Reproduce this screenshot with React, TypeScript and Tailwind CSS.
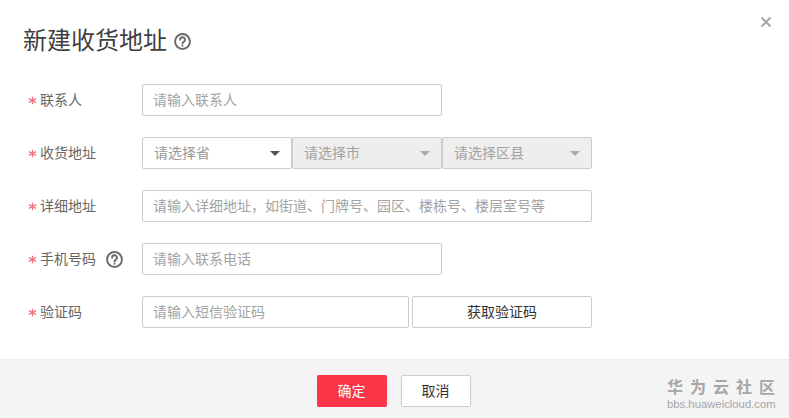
import React from "react";

const FONT = { fontFamily: '"Liberation Sans", "Noto Sans CJK SC", sans-serif' };

function Help({ size, width = 1.6 }: { size: number; width?: number }) {
  return (
    <svg width={size} height={size} viewBox="0 0 16 16" fill="none" stroke="#6b6b6b" strokeWidth={width} className="shrink-0">
      <circle cx="8" cy="8" r="7" />
      <path d="M5.7 6.3a2.3 2.3 0 1 1 3.4 2c-.8.45-1.1.8-1.1 1.6" strokeLinecap="round" />
      <circle cx="8" cy="12" r="0.6" fill="#6b6b6b" strokeWidth="0.8" />
    </svg>
  );
}

function Label({ text, help }: { text: string; help?: boolean }) {
  return (
    <div className="w-[114px] shrink-0 flex items-center text-[14px] text-[#666666] leading-[32px]">
      <span className="w-[12px] h-[32px] flex items-center justify-start">
        <svg width="9" height="9" viewBox="0 0 10 10" fill="none" stroke="#f0747c" strokeWidth="1.5">
          <path d="M5 .8v8.4M1 3l8 4M9 3L1 7" />
        </svg>
      </span>
      <span>{text}</span>
      {help && <span className="ml-[10px] flex"><Help size={17} width={1.8} /></span>}
    </div>
  );
}

function Field({ ph, w }: { ph: string; w: string }) {
  return (
    <div className={`${w} h-[32px] border border-[#cccccc] rounded-[2px] bg-white px-[10px] flex items-center text-[14px] text-[#a3a3a3]`}>
      {ph}
    </div>
  );
}

function Select({ ph, disabled }: { ph: string; disabled?: boolean }) {
  return (
    <div className={disabled
      ? "w-[150px] h-[32px] border border-[#cccccc] rounded-[2px] bg-[#eeeeee] px-[11px] flex items-center justify-between text-[14px] text-[#a3a3a3]"
      : "w-[150px] h-[32px] border border-[#cccccc] rounded-[2px] bg-white px-[11px] flex items-center justify-between text-[14px] text-[#999999]"}>
      <span>{ph}</span>
      <span className={disabled
        ? "w-0 h-0 border-x-[5px] border-x-transparent border-t-[5px] border-t-[#aaaaaa]"
        : "w-0 h-0 border-x-[5px] border-x-transparent border-t-[5px] border-t-[#555555]"} />
    </div>
  );
}

export default function App() {
  return (
    <div className="relative w-[789px] h-[418px] bg-white flex flex-col overflow-hidden" style={FONT}>
      <svg width="12" height="12" viewBox="0 0 12 12" className="absolute left-[760px] top-[16px]" stroke="#a8a8a8" strokeWidth="2.2">
        <path d="M1.5 1.5l9 9M10.5 1.5l-9 9" />
      </svg>

      <div className="flex-1 pl-[28px]">
        <div className="h-[84px] pt-[25px] -ml-[5px] flex items-start">
          <div className="flex items-center h-[32px] gap-[7px]">
            <span className="text-[24px] text-[#404040]">新建收货地址</span>
            <Help size={17} width={1.8} />
          </div>
        </div>
        <div className="flex flex-col gap-[21px]">
          <div className="flex"><Label text="联系人" /><Field ph="请输入联系人" w="w-[300px]" /></div>
          <div className="flex">
            <Label text="收货地址" />
            <Select ph="请选择省" />
            <Select ph="请选择市" disabled />
            <Select ph="请选择区县" disabled />
          </div>
          <div className="flex"><Label text="详细地址" /><Field ph="请输入详细地址，如街道、门牌号、园区、楼栋号、楼层室号等" w="w-[450px]" /></div>
          <div className="flex"><Label text="手机号码" help /><Field ph="请输入联系电话" w="w-[300px]" /></div>
          <div className="flex">
            <Label text="验证码" />
            <Field ph="请输入短信验证码" w="w-[267px]" />
            <div className="ml-[3px] w-[180px] h-[32px] border border-[#cccccc] rounded-[2px] bg-white flex items-center justify-center text-[14px] text-[#333333]">获取验证码</div>
          </div>
        </div>
      </div>

      <div className="h-[59px] bg-[#f4f4f4] border-t border-[#eeeeee] flex justify-center gap-[14px] pt-[15px] pr-[2px]">
        <div className="w-[70px] h-[32px] rounded-[2px] bg-[#fb3448] text-white text-[14px] flex items-center justify-center">确定</div>
        <div className="w-[70px] h-[32px] rounded-[2px] bg-white border border-[#cccccc] text-[#333333] text-[14px] flex items-center justify-center">取消</div>
      </div>

      <div className="absolute left-[667px] top-[378px] w-[110px] text-[#a6a6a6]">
        <div className="text-[16px] leading-[20px] tracking-[7px] font-bold whitespace-nowrap">华为云社区</div>
        <div className="text-[11.3px] leading-[12px] text-[#a6a6a6] whitespace-nowrap">bbs.huaweicloud.com</div>
      </div>
    </div>
  );
}
